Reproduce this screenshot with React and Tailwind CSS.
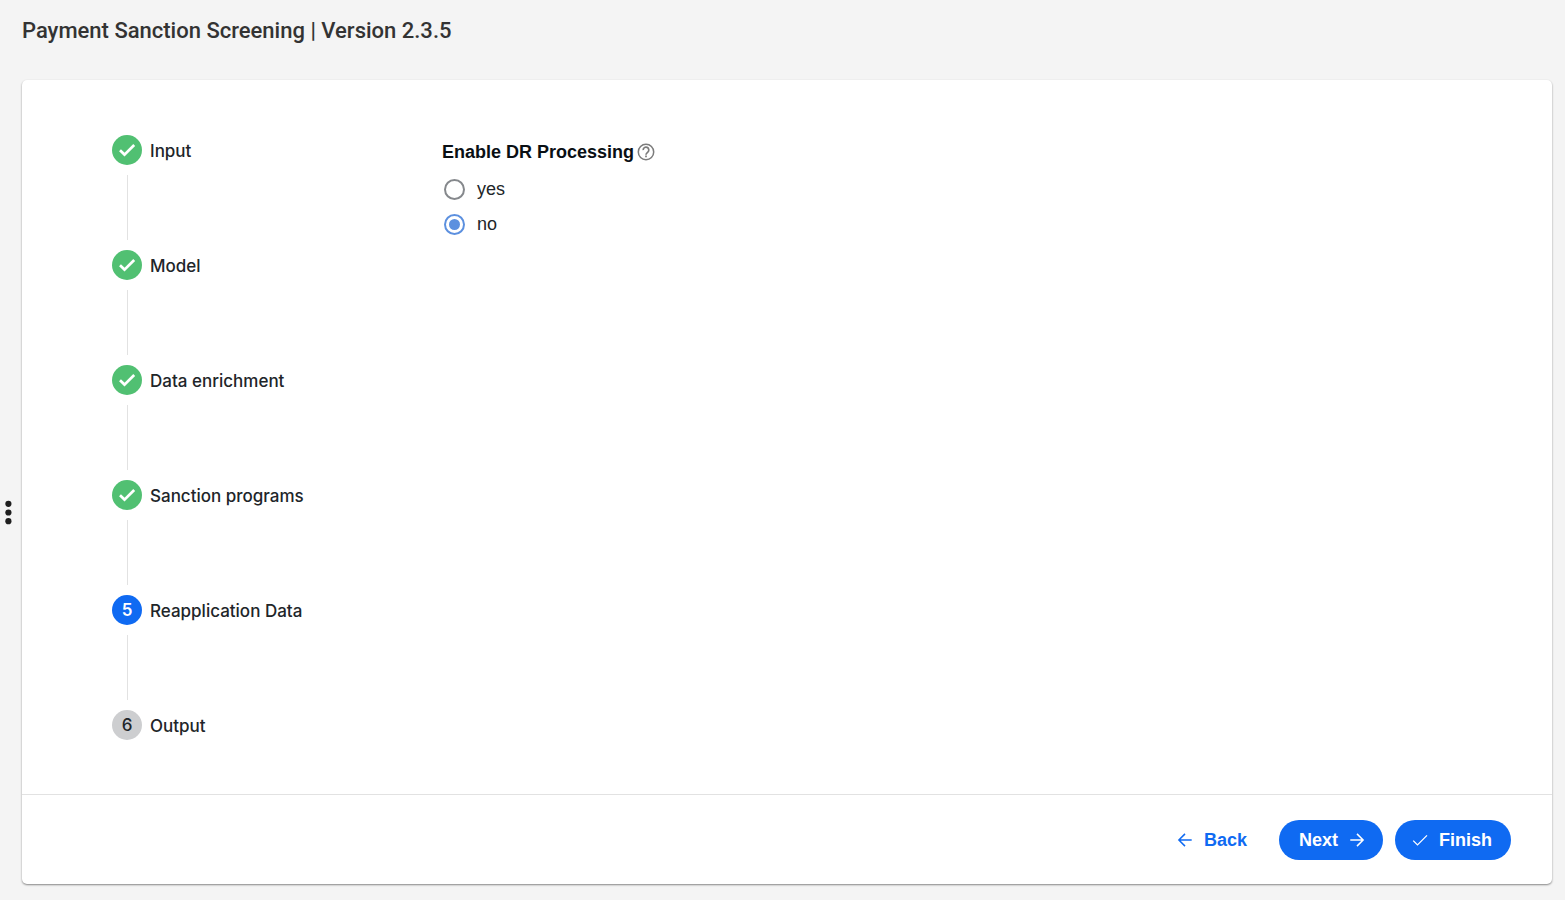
import React from "react";

const steps = [
  { label: "Input", state: "done" },
  { label: "Model", state: "done" },
  { label: "Data enrichment", state: "done" },
  { label: "Sanction programs", state: "done" },
  { label: "Reapplication Data", state: "current" },
  { label: "Output", state: "todo" },
];

const badgeStyles = {
  done: "bg-[#51c072] text-white",
  current: "bg-[#0f6af2] font-semibold text-white",
  todo: "bg-[#cdced0] font-medium text-[#212529]",
};

function Icon({ children }) {
  return (
    <svg
      viewBox="0 0 20 20"
      className="size-5 shrink-0"
      fill="none"
      stroke="currentColor"
      strokeWidth="1.5"
      aria-hidden="true"
    >
      {children}
    </svg>
  );
}

const ArrowLeft = () => (
  <Icon>
    <path d="M16.7 10H4.4M10 3.9L3.9 10L10 16.1" />
  </Icon>
);

const ArrowRight = () => (
  <Icon>
    <path d="M3.3 10H15.6M10 3.9L16.1 10L10 16.1" />
  </Icon>
);

const Check = () => (
  <Icon>
    <path strokeWidth="1.3" d="M3.2 10.6L7.5 14.9L17 5.4" />
  </Icon>
);

const Help = () => (
  <Icon>
    <circle cx="10" cy="10" r="7.7" />
    <path strokeWidth="1.7" d="M7.2 8.1a2.8 2.8 0 1 1 4.6 2c-1 .9-1.8 1.3-1.8 2.6M10 13.5v1.8" />
  </Icon>
);

function Step({ number, label, state, last }) {
  return (
    <li aria-current={state === "current" ? "step" : undefined}>
      <div className="flex h-[30px] items-center gap-2">
        <span className={`flex size-[30px] shrink-0 items-center justify-center rounded-full ${badgeStyles[state]}`}>
          {state === "done" ? (
            <svg viewBox="0 0 30 30" className="size-[30px]" fill="none" stroke="currentColor" strokeWidth="2.7" aria-hidden="true">
              <path d="M8 15.3L12.5 19.6L22.2 10" />
            </svg>
          ) : (
            number
          )}
        </span>
        <span className="pt-0.5 font-medium">{label}</span>
      </div>
      {!last && <div className="my-[10px] ml-[15px] h-[65px] w-px bg-[#e2e2e2]" />}
    </li>
  );
}

function Radio({ value, defaultChecked }) {
  return (
    <label className="flex h-[35px] items-center gap-3 text-lg">
      <input
        type="radio"
        name="dr-processing"
        value={value}
        defaultChecked={defaultChecked}
        className="grid size-[21px] appearance-none place-content-center rounded-full border-2 border-[#85888c] bg-white before:size-[11px] before:rounded-full checked:border-[#5c90df] checked:before:bg-[#5c90df]"
      />
      <span className="pb-0.5">{value}</span>
    </label>
  );
}

export default function App() {
  return (
    <div className="flex min-h-screen bg-[#f4f4f4] font-['Liberation_Sans',Arial,sans-serif] text-[#212529]">
      <aside className="flex w-[22px] shrink-0 flex-col pt-[500px] pl-1">
        <button type="button" aria-label="Open side panel" className="w-2">
          <svg viewBox="0 0 8 25" className="h-[25px] w-2" fill="#1f1f1f" aria-hidden="true">
            <circle cx="4.4" cy="3.8" r="3.1" />
            <circle cx="4.4" cy="12.5" r="3.1" />
            <circle cx="4.4" cy="21.2" r="3.1" />
          </svg>
        </button>
      </aside>
      <main className="flex min-w-0 flex-1 flex-col pr-[13px] pb-4">
        <h1 className="h-20 pt-4 font-['Roboto',sans-serif] text-[22px] leading-[30px] font-medium text-[#333333]">
          Payment Sanction Screening | Version 2.3.5
        </h1>
        <form
          onSubmit={(e) => e.preventDefault()}
          className="flex flex-1 flex-col rounded-[5px] bg-white shadow-[0_1px_2px_rgba(0,0,0,0.45)]"
        >
          <div className="flex flex-1 px-[90px] pt-[55px]">
            <ol className="w-[330px] shrink-0 font-['Inter',sans-serif] text-[17px] leading-6">
              {steps.map((s, i) => (
                <Step key={s.label} number={i + 1} label={s.label} state={s.state} last={i === steps.length - 1} />
              ))}
            </ol>
            <fieldset className="pt-1">
              <legend className="flex h-[30px] items-center gap-0.5 pt-1 text-lg font-bold text-[#0a0f14]">
                Enable DR Processing
                <span className="text-[#7c7c7c]">
                  <Help />
                </span>
              </legend>
              <div className="pt-[3px] pl-0.5">
                <Radio value="yes" />
                <Radio value="no" defaultChecked />
              </div>
            </fieldset>
          </div>
          <footer className="flex h-[90px] items-center justify-end border-t border-[#e2e2e2] pr-[41px] text-lg font-bold">
            <button type="button" className="mr-3 flex h-10 items-center gap-[9px] rounded-full px-5 text-[#0f6af2]">
              <ArrowLeft />
              Back
            </button>
            <button type="button" className="mr-3 flex h-10 items-center gap-[9px] rounded-full bg-[#0f6af2] pr-4 pl-5 text-white">
              Next
              <ArrowRight />
            </button>
            <button type="submit" className="flex h-10 items-center gap-[9px] rounded-full bg-[#0f6af2] pr-[19px] pl-[15px] text-white">
              <Check />
              Finish
            </button>
          </footer>
        </form>
      </main>
    </div>
  );
}
